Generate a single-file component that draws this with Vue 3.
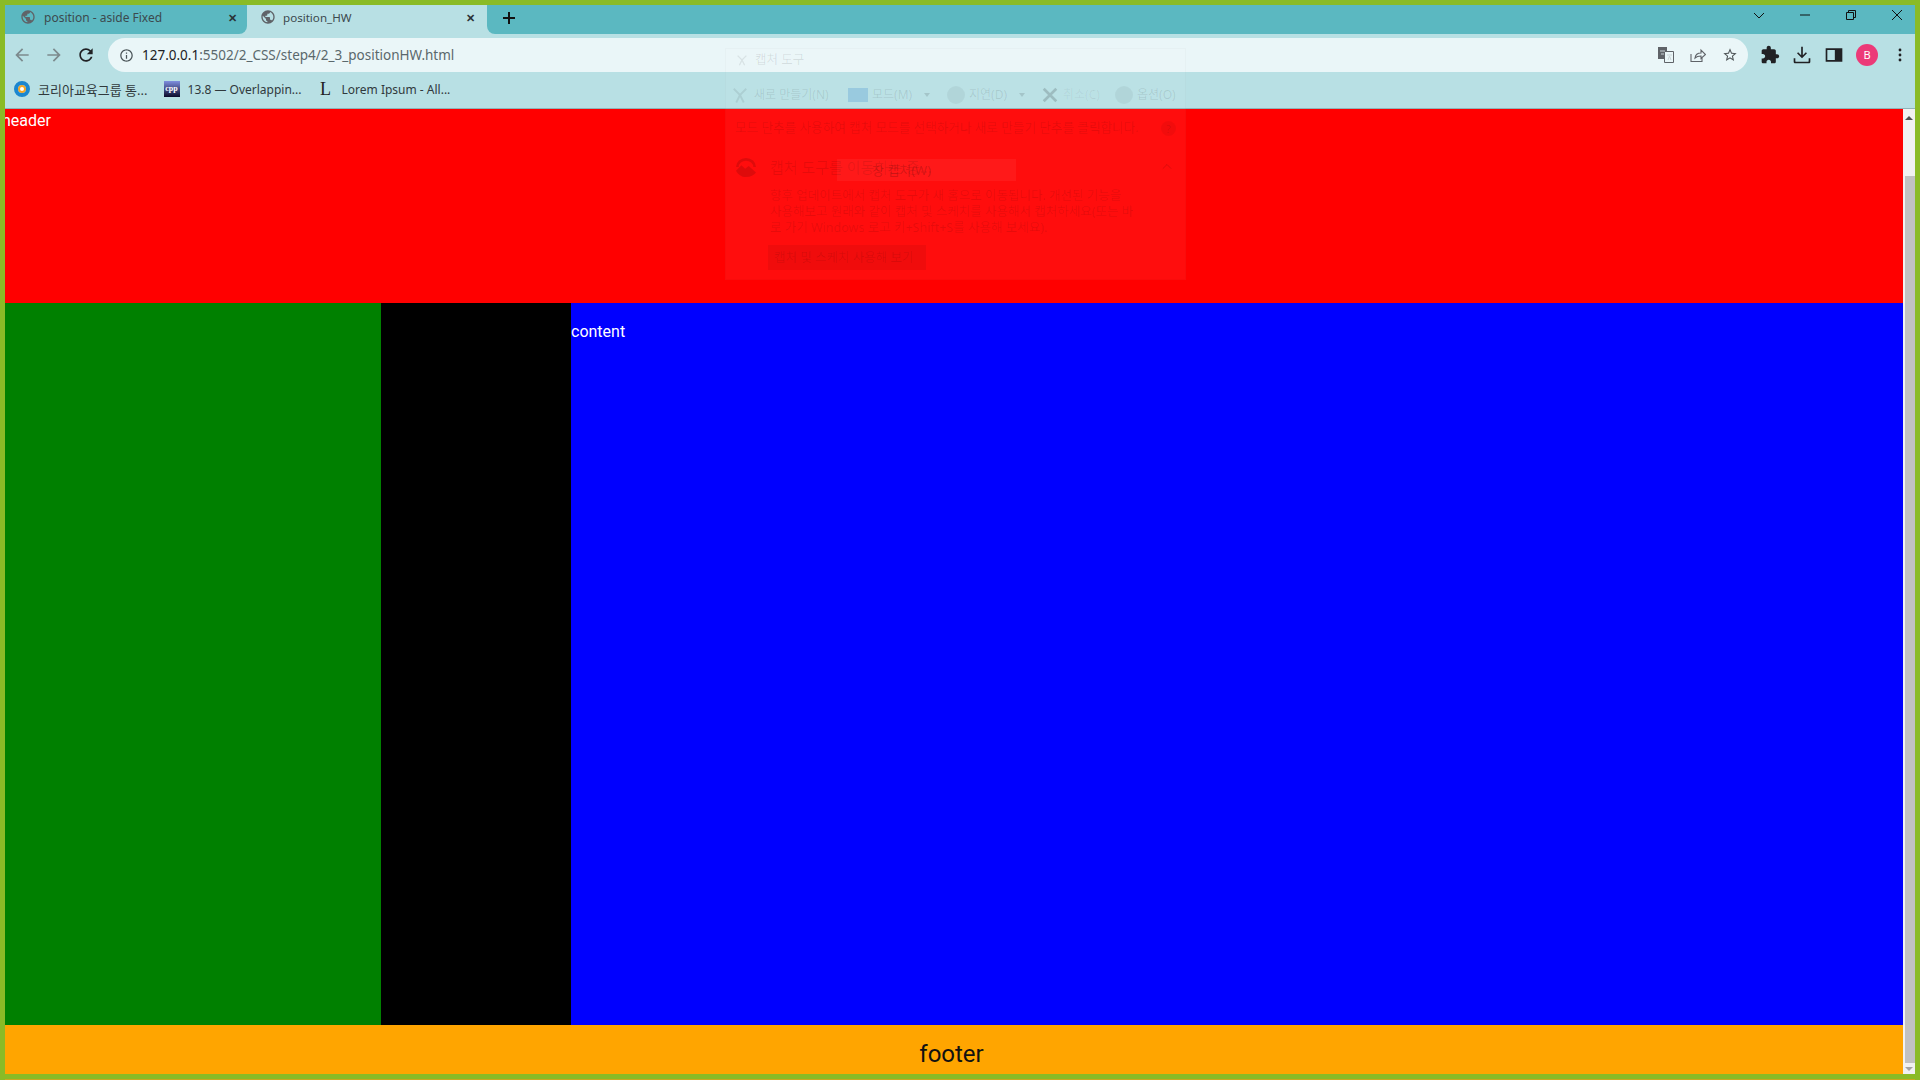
<template>
  <div class="window">
    <div class="tabstrip">
      <div class="tab">
        <svg class="globe" viewBox="0 0 24 24"><path :d="globePath" /></svg>
        <span class="tab-title">position - aside Fixed</span>
        <span class="tab-close">✕</span>
      </div>
      <div class="tab tab-active">
        <svg class="globe" viewBox="0 0 24 24"><path :d="globePath" /></svg>
        <span class="tab-title">position_HW</span>
        <span class="tab-close">✕</span>
      </div>
      <div class="strip-rest">
        <svg class="new-tab" viewBox="0 0 14 14"><path d="M6 1h2v5h5v2H8v5H6V8H1V6h5z" /></svg>
        <div class="win-controls">
          <svg viewBox="0 0 12 12"><path d="M1 4l5 5 5-5" /></svg>
          <svg viewBox="0 0 12 12"><path d="M1 6h10" /></svg>
          <svg viewBox="0 0 12 12"><path d="M1.5 3.5h7v7h-7zM3.5 3.5v-2h7v7h-2" /></svg>
          <svg viewBox="0 0 12 12"><path d="M1 1l10 10M11 1L1 11" /></svg>
        </div>
      </div>
    </div>

    <div class="toolbar">
      <div class="nav">
        <svg class="ico dim" viewBox="0 0 24 24"><path d="M20 11H7.83l5.59-5.59L12 4l-8 8 8 8 1.41-1.41L7.83 13H20v-2z" /></svg>
        <svg class="ico dim" viewBox="0 0 24 24"><path d="M12 4l-1.41 1.41L16.17 11H4v2h12.17l-5.58 5.59L12 20l8-8z" /></svg>
        <svg class="ico" viewBox="0 0 24 24"><path d="M17.65 6.35C16.2 4.9 14.21 4 12 4c-4.42 0-7.99 3.58-7.99 8s3.57 8 7.99 8c3.73 0 6.84-2.55 7.73-6h-2.08c-.82 2.33-3.04 4-5.65 4-3.31 0-6-2.69-6-6s2.69-6 6-6c1.66 0 3.14.69 4.22 1.78L13 11h7V4l-2.35 2.35z" /></svg>
      </div>
      <div class="omnibox">
        <svg class="info" viewBox="0 0 24 24"><path d="M11 7h2v2h-2zm0 4h2v6h-2zm1-9C6.48 2 2 6.48 2 12s4.48 10 10 10 10-4.48 10-10S17.52 2 12 2zm0 18c-4.41 0-8-3.59-8-8s3.59-8 8-8 8 3.59 8 8-3.59 8-8 8z" /></svg>
        <span class="url"><b>127.0.0.1</b>:5502/2_CSS/step4/2_3_positionHW.html</span>
        <div class="omni-actions">
          <svg class="omni-ico" viewBox="0 0 16 16">
            <path class="tr-back" d="M0 0h9v12H0z" />
            <path class="tr-front" d="M6.5 4.5h9v11h-9z" />
            <path class="tr-mark" d="M2 4h5M3 7h3M9 8h5M10 13l1.500-4 1.500 4" />
          </svg>
          <svg class="omni-ico" viewBox="0 0 16 16">
            <path class="share" d="M1 7v7.500h11V11M5 11c.5-3.500 3-5 6-5V3l4.500 4.500L11 11.500V9c-2.500 0-4.500.5-6 2z" />
          </svg>
          <svg class="omni-ico star" viewBox="0 0 24 24"><path d="M22 9.240l-7.190-.62L12 2 9.190 8.630 2 9.240l5.460 4.730L5.820 21 12 17.270 18.180 21l-1.630-7.030L22 9.240zM12 15.400l-3.760 2.270 1-4.280-3.320-2.880 4.380-.38L12 6.100l1.710 4.040 4.380.38-3.320 2.880 1 4.280L12 15.400z" /></svg>
        </div>
      </div>
      <div class="actions">
        <svg class="ico" viewBox="0 0 24 24"><path d="M20.500 11H19V7c0-1.100-.9-2-2-2h-4V3.500C13 2.120 11.880 1 10.500 1S8 2.120 8 3.500V5H4c-1.100 0-1.990.9-1.990 2v3.800H3.500c1.490 0 2.700 1.210 2.700 2.700s-1.210 2.700-2.700 2.700H2V20c0 1.100.9 2 2 2h3.800v-1.500c0-1.490 1.210-2.700 2.700-2.700 1.490 0 2.700 1.210 2.700 2.700V22H17c1.100 0 2-.9 2-2v-4h1.500c1.380 0 2.500-1.120 2.500-2.500S21.880 11 20.500 11z" /></svg>
        <svg class="ico" viewBox="0 0 24 24"><path d="M11 2h2v10.200l3.600-3.600 1.400 1.400-6 6-6-6 1.400-1.400 3.600 3.600zM2 16h2v3.500c0 .3.200.5.500.5h15c.3 0 .5-.2.500-.5V16h2v4c0 1.100-.9 2-2 2H4c-1.100 0-2-.9-2-2z" /></svg>
        <svg class="ico" viewBox="0 0 24 24"><path fill-rule="evenodd" d="M2 4h20v16H2zM4 6v12h9V6z" /></svg>
        <span class="avatar">B</span>
        <svg class="ico" viewBox="0 0 24 24"><circle cx="12" cy="6" r="1.700" /><circle cx="12" cy="12" r="1.700" /><circle cx="12" cy="18" r="1.700" /></svg>
      </div>
    </div>

    <div class="bookmarks">
      <div class="bookmark">
        <span class="ring"></span>
        <span class="ko">코리아교육그룹 통...</span>
      </div>
      <div class="bookmark">
        <span class="cpp">cpp</span>
        <span>13.8 — Overlappin...</span>
      </div>
      <div class="bookmark">
        <span class="lorem">L</span>
        <span>Lorem Ipsum - All...</span>
      </div>
    </div>

    <div class="page">
      <div class="doc">
        <header class="site-header">header</header>
        <div class="body-row">
          <aside class="aside-green"></aside>
          <aside class="aside-black"></aside>
          <main class="content">content</main>
        </div>
        <footer class="site-footer">footer</footer>
      </div>
      <div class="scrollbar">
        <span class="arrow-up"></span>
        <span class="thumb"></span>
        <span class="arrow-down"></span>
      </div>
    </div>

    <div class="bottom-line"></div>

    <!-- 창이 비쳐 보이는 캡처 도구 -->
    <div class="ghost">
      <div class="ghost-title">
        <svg class="g-scissor" viewBox="0 0 16 16"><path d="M8 8L3 3M8 8l5-5M8 8l-3 6M8 8l3 6" /></svg>
        <span>캡처 도구</span>
      </div>
      <div class="ghost-tools">
        <span class="gt gt-new"><svg class="g-scissor big" viewBox="0 0 16 16"><path d="M8 8L3 3M8 8l5-5M8 8l-3 6M8 8l3 6" /></svg>새로 만들기(N)</span>
        <span class="gt gt-mode"><i class="g-rect"></i>모드(M)<i class="g-caret"></i></span>
        <span class="gt gt-delay"><i class="g-round"></i>지연(D)<i class="g-caret"></i></span>
        <span class="gt gt-cancel"><svg viewBox="0 0 20 20"><path d="M3 3l14 14M17 3L3 17" /></svg>취소(C)</span>
        <span class="gt gt-opt"><i class="g-round"></i>옵션(O)</span>
      </div>
      <div class="ghost-hint">
        <span>모드 단추를 사용하여 캡처 모드를 선택하거나 새로 만들기 단추를 클릭합니다.</span>
        <span class="g-help">?</span>
      </div>
      <div class="ghost-heading">
        <svg class="g-photo" viewBox="0 0 24 22"><path d="M12 1a11 10 0 0 0-11 10h3a8 7 0 0 1 16 0h3A11 10 0 0 0 12 1zM1 15l6-6 4 4 4-3 8 7c-2 3-6 5-11 5S3 19 1 15z" /></svg>
        <span>캡처 도구를 이동하는 중...</span>
        <svg class="g-chev" viewBox="0 0 12 12"><path d="M1 8l5-5 5 5" /></svg>
      </div>
      <p class="ghost-text">향후 업데이트에서 캡처 도구가 새 홈으로 이동됩니다. 개선된 기능을<br>사용해보고 원래와 같이 캡처 및 스케치를 사용해서 캡처하세요(또는 바<br>로 가기 Windows 로고 키+Shift+S를 사용해 보세요).</p>
      <div class="ghost-btn">캡처 및 스케치 사용해 보기</div>
      <div class="ghost-tip">창 캡처(W)</div>
    </div>
  </div>
</template>

<script setup>
const globePath = 'M12 2C6.48 2 2 6.48 2 12s4.48 10 10 10 10-4.48 10-10S17.52 2 12 2zm-1 17.93c-3.95-.49-7-3.85-7-7.93 0-.62.08-1.21.21-1.79L9 15v1c0 1.1.9 2 2 2v1.93zm6.9-2.54c-.26-.81-1-1.39-1.9-1.39h-1v-3c0-.55-.45-1-1-1H8v-2h2c.55 0 1-.45 1-1V7h2c1.1 0 2-.9 2-2v-.41c2.93 1.19 5 4.06 5 7.41 0 2.08-.8 3.97-2.1 5.39z'
</script>

<style>
html, body {
  margin: 0;
  overflow: hidden;
}
</style>

<style scoped>
.window {
  position: relative;
  box-sizing: border-box;
  width: 1920px;
  height: 1080px;
  padding: 5px 5px 1px;
  display: flex;
  flex-direction: column;
  background: #8abb26;
  overflow: hidden;
  font-family: "Noto Sans", "Noto Sans CJK KR", sans-serif;
}

/* 탭 */
.tabstrip {
  height: 29px;
  display: flex;
  flex: none;
  background: #b8e0e4;
}
.tab {
  width: 242px;
  box-sizing: border-box;
  padding: 0 10px 5px 15px;
  display: flex;
  align-items: center;
  background: #5bb8c1;
  border-bottom-right-radius: 8px;
}
.tab-active {
  width: 240px;
  padding: 0 12px 5px 13px;
  background: transparent;
  border-radius: 0;
}
.globe {
  width: 16px;
  height: 16px;
  fill: #5f6368;
  flex: none;
}
.tab-title {
  margin-left: 8px;
  flex: 1;
  font-size: 12px;
  color: #3c4a4e;
}
.tab-active .tab-title {
  margin-left: 7px;
  font-size: 11.6px;
}
.tab-close {
  font-size: 11px;
  font-weight: 700;
  color: #2a3336;
}
.strip-rest {
  flex: 1;
  display: flex;
  align-items: center;
  justify-content: space-between;
  background: #5bb8c1;
  border-bottom-left-radius: 8px;
}
.new-tab {
  width: 14px;
  height: 14px;
  margin: 0 0 3px 15px;
  fill: #111;
}
.win-controls {
  display: flex;
  gap: 34px;
  margin: 0 12px 9px 0;
}
.win-controls svg {
  width: 12px;
  height: 12px;
  fill: none;
  stroke: #111;
  stroke-width: 1;
}

/* 주소창 */
.toolbar {
  height: 39px;
  flex: none;
  box-sizing: border-box;
  padding-top: 4px;
  display: flex;
  align-items: flex-start;
  background: #b8e0e4;
}
.nav {
  width: 103px;
  height: 34px;
  padding-left: 7px;
  box-sizing: border-box;
  display: flex;
  align-items: center;
  gap: 12px;
  flex: none;
}
.ico {
  width: 20px;
  height: 20px;
  fill: #202124;
  flex: none;
}
.dim {
  fill: #7c8a8d;
}
.omnibox {
  width: 1640px;
  height: 34px;
  box-sizing: border-box;
  padding: 0 10px 0 11px;
  display: flex;
  align-items: center;
  background: #eaf6f8;
  border-radius: 17px;
  flex: none;
}
.info {
  width: 15px;
  height: 15px;
  fill: #4a5458;
  flex: none;
}
.url {
  margin-left: 8px;
  flex: 1;
  font-size: 13.5px;
  color: #5a686c;
}
.url b {
  font-weight: 400;
  color: #202124;
}
.omni-actions {
  display: flex;
  gap: 16px;
}
.omni-ico {
  width: 16px;
  height: 16px;
  flex: none;
}
.tr-back {
  fill: #5f6368;
}
.tr-front {
  fill: #eaf6f8;
  stroke: #5f6368;
}
.tr-mark {
  fill: none;
  stroke: #c9d3d6;
}
.share {
  fill: none;
  stroke: #5f6368;
  stroke-width: 1.1;
}
.star {
  fill: #4f5659;
}
.actions {
  flex: 1;
  height: 34px;
  display: flex;
  align-items: center;
  padding-left: 12px;
  gap: 12px;
}
.avatar {
  width: 22px;
  height: 22px;
  border-radius: 50%;
  background: #ec3a78;
  color: #fff;
  font-size: 11px;
  line-height: 22px;
  text-align: center;
  flex: none;
}

/* 북마크 */
.bookmarks {
  height: 36px;
  flex: none;
  box-sizing: border-box;
  padding: 0 0 3px 9px;
  display: flex;
  align-items: center;
  gap: 16px;
  background: #b8e0e4;
  border-bottom: 1px solid #8fb3b8;
  font-size: 12px;
  color: #30393c;
}
.bookmark {
  display: flex;
  align-items: center;
  gap: 8px;
}
.ko {
  font-size: 13px;
}
.ring {
  width: 8px;
  height: 8px;
  border: 4px solid #1b87cf;
  border-radius: 50%;
  background: #fff;
  box-shadow: inset 0 0 0 2px #f5a623;
}
.cpp {
  width: 16px;
  height: 16px;
  background: linear-gradient(#7f8fe0, #0a0a2a);
  color: #fff;
  font: 700 8px/16px "Liberation Serif", serif;
  text-align: center;
}
.lorem {
  width: 16px;
  text-align: center;
  font: 18px/16px "Liberation Serif", serif;
  color: #222;
}

/* 페이지 */
.page {
  flex: 1;
  min-height: 0;
  display: flex;
}
.doc {
  flex: 1;
  display: flex;
  flex-direction: column;
  overflow: hidden;
  font-family: Roboto, "Noto Sans", sans-serif;
  font-size: 16px;
  line-height: 22px;
}
.site-header {
  height: 194px;
  flex: none;
  box-sizing: border-box;
  padding: 1px 0 0;
  margin-left: -3px;
  background: #f00;
  color: #fff;
}
.body-row {
  flex: 1;
  display: flex;
}
.aside-green {
  width: 376px;
  background: #008000;
}
.aside-black {
  width: 190px;
  background: #000;
}
.content {
  flex: 1;
  padding-top: 18px;
  background: #00f;
  color: #fff;
}
.site-footer {
  height: 49px;
  flex: none;
  box-sizing: border-box;
  padding: 4px 5px 0 0;
  background: #ffa500;
  color: #111;
  font-size: 24px;
  line-height: 50px;
  text-align: center;
}
.scrollbar {
  width: 12px;
  flex: none;
  display: flex;
  flex-direction: column;
  align-items: center;
  background: #f1f1f1;
}
.arrow-up,
.arrow-down {
  width: 0;
  height: 0;
  border-left: 4px solid transparent;
  border-right: 4px solid transparent;
  flex: none;
}
.arrow-up {
  margin: 7px 0 3px;
  border-bottom: 4px solid #505050;
}
.arrow-down {
  margin: 4px 0 3px;
  border-top: 4px solid #a3a3a3;
}
.thumb {
  flex: 1;
  align-self: stretch;
  margin: 53px 0 0 2px;
  background: #c1c1c1;
}
.bottom-line {
  height: 5px;
  flex: none;
  box-shadow: 0 1px 0 #c9a820;
}

/* 비쳐 보이는 창 */
.ghost {
  position: absolute;
  left: 725px;
  top: 48px;
  width: 461px;
  height: 232px;
  box-sizing: border-box;
  padding: 0 9px;
  background: rgba(255, 255, 255, 0.05);
  border: 1px solid rgba(0, 0, 0, 0.02);
  color: rgba(0, 0, 0, 0.1);
  font-size: 12px;
  line-height: 16px;
  pointer-events: none;
}
.ghost-title {
  height: 22px;
  display: flex;
  align-items: center;
  gap: 6px;
  font-size: 12.5px;
}
.g-scissor {
  width: 14px;
  height: 14px;
  fill: none;
  stroke: rgba(0, 0, 0, 0.08);
  stroke-width: 1.5;
}
.gt svg.big {
  width: 20px;
  height: 20px;
  stroke: rgba(0, 0, 0, 0.08);
  stroke-width: 1.5;
}
.ghost-tools {
  height: 38px;
  margin: 5px 0 0 -5px;
  display: flex;
  align-items: center;
}
.gt {
  display: flex;
  align-items: center;
  gap: 4px;
  white-space: nowrap;
}
.gt-new { width: 118px; }
.gt-mode { width: 99px; }
.gt-delay { width: 94px; }
.gt-cancel { width: 74px; color: rgba(0, 0, 0, 0.06); }
.gt svg {
  width: 18px;
  height: 18px;
  fill: none;
  stroke: rgba(0, 0, 0, 0.16);
  stroke-width: 3;
}
.g-round {
  width: 18px;
  height: 18px;
  border-radius: 50%;
  background: rgba(0, 0, 0, 0.05);
}
.g-rect {
  width: 20px;
  height: 14px;
  background: rgba(0, 100, 200, 0.18);
}
.g-caret {
  margin-left: 8px;
  border-left: 3px solid transparent;
  border-right: 3px solid transparent;
  border-top: 4px solid rgba(0, 0, 0, 0.12);
}
.ghost-hint {
  height: 28px;
  display: flex;
  align-items: center;
  justify-content: space-between;
  font-size: 12.6px;
  white-space: nowrap;
}
.g-help {
  width: 15px;
  height: 15px;
  border-radius: 50%;
  background: rgba(0, 0, 0, 0.05);
  font-size: 11px;
  line-height: 15px;
  text-align: center;
}
.ghost-heading {
  height: 26px;
  margin-top: 12px;
  display: flex;
  align-items: center;
  gap: 13px;
  font-size: 15px;
}
.g-photo {
  width: 22px;
  height: 20px;
  fill: rgba(0, 0, 0, 0.13);
  flex: none;
}
.g-chev {
  width: 10px;
  height: 10px;
  margin: 0 4px 0 auto;
  fill: none;
  stroke: rgba(0, 0, 0, 0.14);
  stroke-width: 1.2;
}
.ghost-text {
  margin: 8px 0 0 35px;
  font-size: 12.5px;
  white-space: nowrap;
}
.ghost-btn {
  width: 158px;
  height: 25px;
  margin: 9px 0 0 33px;
  box-sizing: border-box;
  padding-left: 6px;
  background: rgba(0, 0, 0, 0.06);
  font-size: 12.5px;
  line-height: 25px;
  white-space: nowrap;
}
.ghost-tip {
  position: absolute;
  left: 111px;
  top: 110px;
  width: 179px;
  height: 22px;
  box-sizing: border-box;
  padding-right: 50px;
  background: rgba(255, 255, 255, 0.05);
  text-align: center;
  font-size: 13px;
  line-height: 22px;
  color: rgba(0, 0, 0, 0.18);
}
</style>
